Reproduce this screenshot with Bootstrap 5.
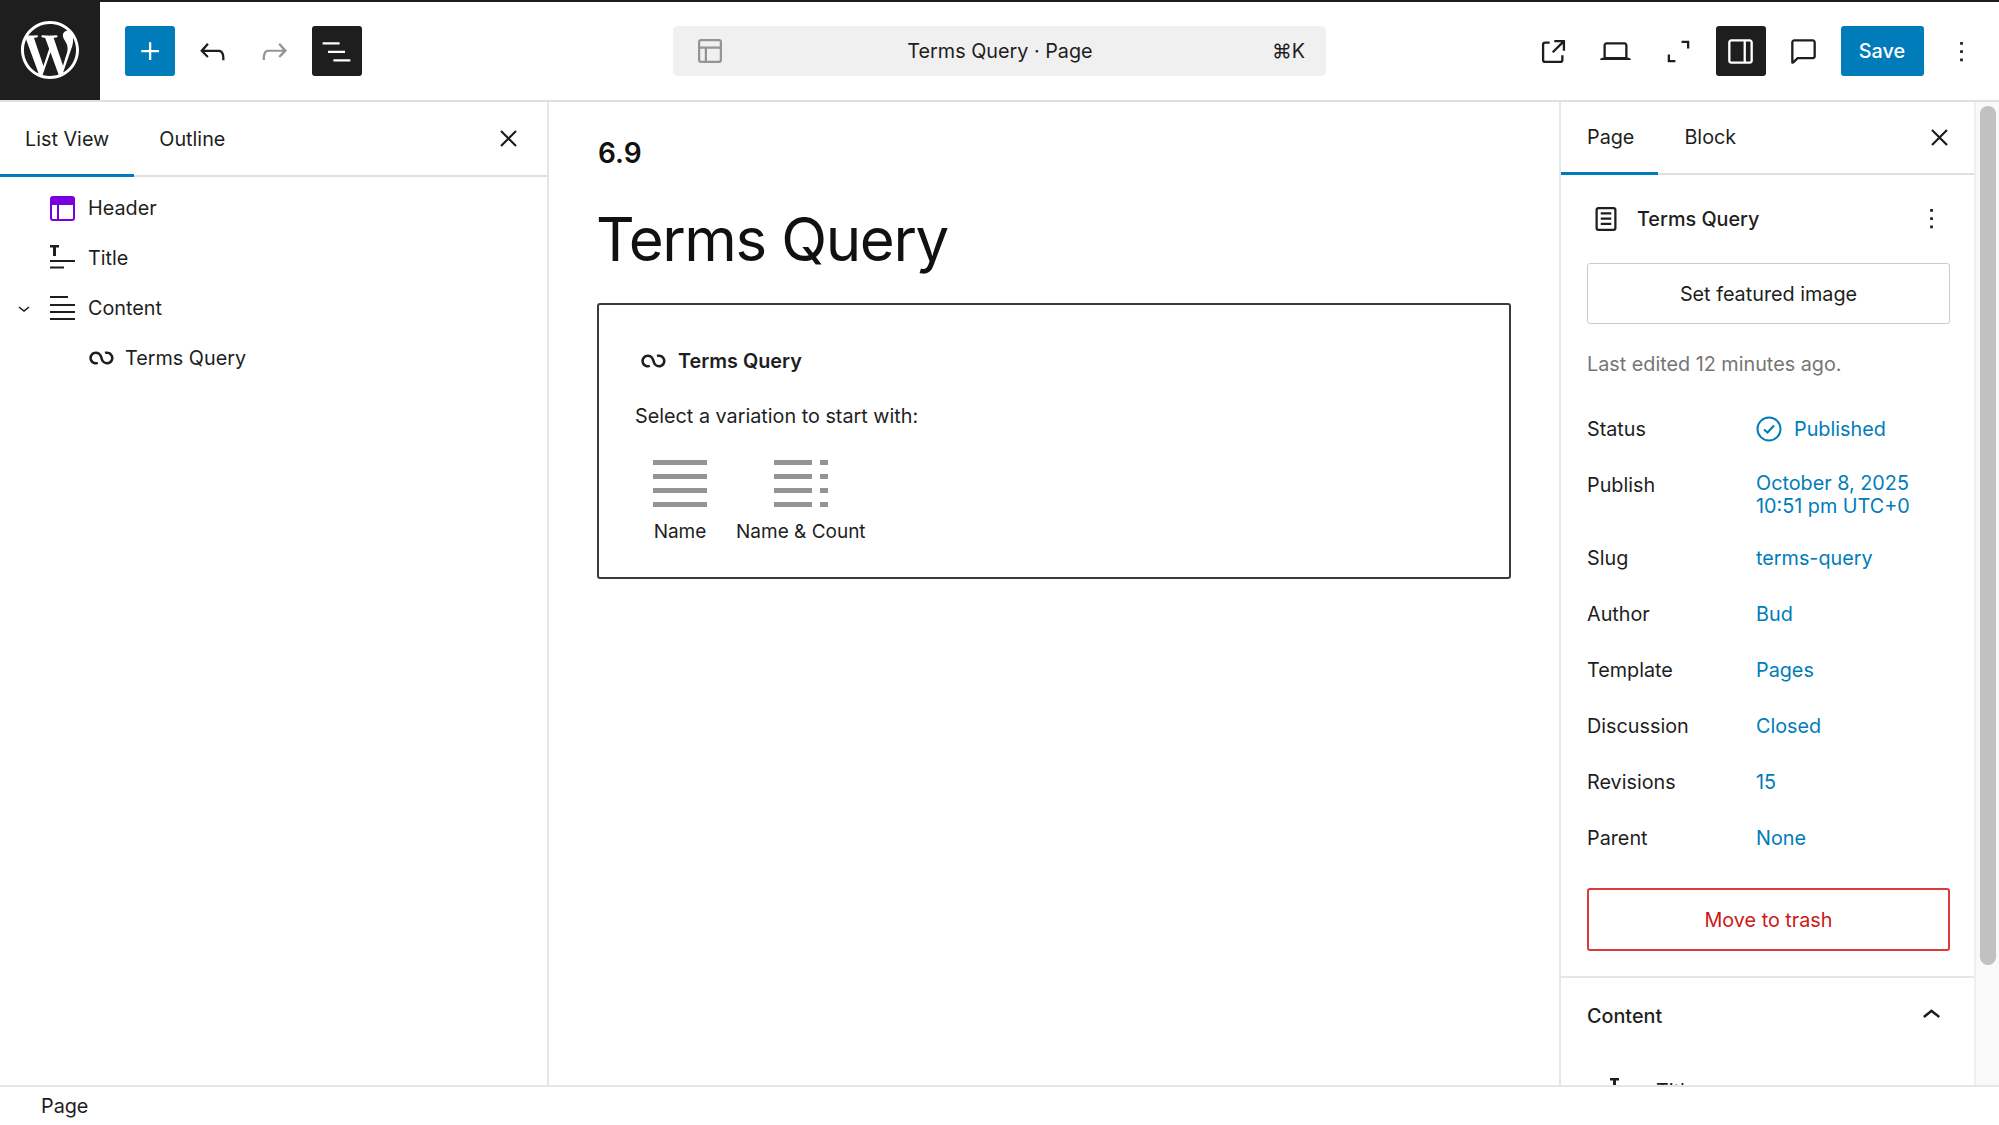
<!DOCTYPE html>
<html lang="en">
<head>
<meta charset="utf-8">
<title>Terms Query</title>
<link href="https://cdn.jsdelivr.net/npm/bootstrap@5.3.0/dist/css/bootstrap.min.css" rel="stylesheet">
<style>
html,body{height:100%;overflow:hidden}
body{font-family:Inter,"Noto Sans",sans-serif;font-size:19.8px;color:#1e1e1e;background:#fff;line-height:24px}
.wp-shell{height:1125px}
.wp-top{height:102px;border-top:2px solid #1e1e1e;border-bottom:2px solid #e0e0e0;flex:none}
.wp-logo{width:100px;height:100px;margin-top:-2px;background:#1e1e1e;flex:none}
.wp-logo svg{width:58px;height:58px;fill:#fff}
.wp-lead{width:673px;flex:none}
.wp-trail{flex:1 1 0;min-width:0;gap:12.5px;padding-right:13px}
.wp-leadbtns{gap:12.2px;margin-left:25px}
.wp-ic{width:33px;height:33px;fill:currentColor;flex:none;display:block}
.wp-ic-l{width:37px;height:37px}
.wp-xmark{width:25px;height:25px;fill:none;stroke:currentColor;stroke-width:2.200;display:block}
.wp-tb{width:50px;height:50px;padding:0;border:0;border-radius:3px;background:transparent;color:#1e1e1e;display:flex;align-items:center;justify-content:center;flex:none}
.wp-tb.is-blue{background:#007cba;color:#fff}
.wp-tb.is-dark{background:#1e1e1e;color:#fff}
.wp-tb.is-off{color:#949494}
.wp-cmd{width:653px;height:50px;background:#f0f0f0;border-radius:5px;padding:0 21px 0 19px;flex:none;position:relative}
.wp-cmd .wp-ic{color:#949494;width:36px;height:36px}
.wp-save{width:83px;height:50px;border-radius:3px;background:#007cba;color:#fff;font-size:19.8px;font-weight:500;display:flex;align-items:center;justify-content:center;border:0;padding:0;flex:none}
.wp-main{height:983px;min-height:0;overflow:hidden}
.wp-left{width:549px;border-right:2px solid #e6e6e6;flex:none}
.wp-tabs{height:75px;border-bottom:2px solid #e0e0e0;flex:none;position:relative}
.wp-tab{height:75px;padding:0 25px;display:flex;align-items:center;color:#1e1e1e;margin-bottom:-2px;border-bottom:3px solid transparent;padding-top:1px}
.wp-tab.is-on{border-bottom-color:#007cba}
.wp-close{margin:11px 14px 0 0}
.wp-tree{padding-top:6px}
.wp-node{height:50px;display:flex;align-items:center;position:relative}
.wp-node .wp-ic{margin-right:9px}
.wp-node-1{padding-left:46px}
.wp-node-2{padding-left:85px}
.wp-node-2 .wp-ic{width:37px;height:37px;margin-right:5px;margin-left:-2px}
.wp-caret{width:24px;height:24px;position:absolute;left:12px;top:13px;fill:#1e1e1e}
.wp-canvas{flex:1 1 0;min-width:0;padding:0 48px;border-right:2px solid #e6e6e6}
.wp-ver{font-size:28px;line-height:36px;font-weight:600;margin-top:33px;color:#111;padding-left:1px}
.wp-h1{font-size:60px;line-height:72px;font-weight:400;margin:32px 0 0 -1px;letter-spacing:-1.400px;color:#111}
.wp-ph{height:276px;border:2px solid #3a3a3a;border-radius:3px;margin-top:28px;padding:0 0 0 36px}
.wp-ph-head{height:28px;margin-top:42px;font-weight:600}
.wp-ph-head .wp-ic{width:37px;height:37px;margin-right:6px}
.wp-ph-txt{margin-top:29px;line-height:24px}
.wp-vars{margin-top:32px;margin-left:18px;gap:29px}
.wp-var{display:flex;flex-direction:column;align-items:center;font-size:19px}
.wp-var svg{width:54px;height:48px;fill:#949494;display:block;margin-bottom:12px}
.wp-right{width:415px;flex:none;overflow:hidden;border-right:2px solid #eee}
.wp-right .wp-tab{padding:0 24px 0 26px;height:73px}
.wp-right .wp-tabs{height:73px}
.wp-right .wp-close{margin:10px 10px 0 0}
.wp-panel{padding:0 25px 0 26px;border-bottom:2px solid #e6e6e6;flex:none}
.wp-pagehead{height:87px;margin-bottom:1px;position:relative;font-weight:500}
.wp-pagehead .wp-doc{width:36px;height:36px;margin:0 14px 0 0;position:relative;left:1px}
.wp-pagehead .wp-more{margin-right:1px}
.wp-btnline{height:61px;width:363px;border:1px solid #ccc;border-radius:3px;background:#fff;color:#1e1e1e;display:flex;align-items:center;justify-content:center;font-size:19.8px;font-weight:400;padding:0}
.wp-edited{margin-top:28px;color:#757575;line-height:24px}
.wp-rows{margin-top:25px}
.wp-row{display:flex;height:56px;line-height:56px}
.wp-row.is-tall{height:73px}
.wp-lab{width:169px;flex:none}
.wp-val{color:#007cba;display:flex;align-items:center}
.wp-row.is-tall .wp-val{line-height:23px;padding-top:15px;align-items:flex-start}
.wp-val svg{width:26px;height:26px;margin-right:12px;fill:none;stroke:#007cba;stroke-width:2}
.wp-trash{height:63px;width:363px;border:2px solid #d93a3a;border-radius:3px;background:#fff;color:#cc1818;display:flex;align-items:center;justify-content:center;font-size:19.8px;font-weight:400;padding:0;margin-top:22px;margin-bottom:25px}
.wp-cont-head{height:75px;padding:0 25px 0 26px;font-weight:500;position:relative;flex:none}
.wp-cont-head .wp-ic{margin-right:-1px}
.wp-cut{padding-left:45px;height:40px;margin-top:22px;position:relative;flex:none}
.wp-cut .wp-ic{margin-right:17px}
.wp-cut span{display:block;margin-top:4px}
.wp-scroll{width:23px;background:#f9f9f9;flex:none;padding:4px 3px 0 4px}
.wp-thumb{height:859px;background:#c1c1c1;border-radius:8px}
.wp-foot{height:40px;border-top:2px solid #e6e6e6;padding-left:41px;flex:none;background:#fff}
</style>
</head>
<body>
<div class="wp-shell d-flex flex-column">

<header class="wp-top d-flex align-items-center">
  <div class="wp-lead d-flex align-items-center">
    <div class="wp-logo d-flex align-items-center justify-content-center">
      <svg viewBox="0 0 24 24"><path d="M21.469 6.825c.84 1.537 1.318 3.3 1.318 5.175 0 3.979-2.156 7.456-5.363 9.325l3.295-9.527c.615-1.54.82-2.771.82-3.864 0-.405-.026-.78-.07-1.11m-7.981.105c.647-.03 1.232-.105 1.232-.105.582-.075.514-.93-.067-.899 0 0-1.755.135-2.88.135-1.064 0-2.85-.15-2.85-.15-.585-.03-.661.855-.075.885 0 0 .54.061 1.125.09l1.68 4.605-2.37 7.08L5.354 6.9c.649-.03 1.234-.1 1.234-.1.585-.075.516-.93-.065-.896 0 0-1.746.138-2.874.138-.2 0-.438-.008-.69-.015C4.911 3.15 8.235 1.215 12 1.215c2.809 0 5.365 1.072 7.286 2.833-.046-.003-.091-.009-.141-.009-1.06 0-1.812.923-1.812 1.914 0 .89.513 1.643 1.06 2.531.411.72.89 1.643.89 2.977 0 .915-.354 1.994-.821 3.479l-1.075 3.585-3.9-11.61.001.014zM12 22.784c-1.059 0-2.081-.153-3.048-.437l3.237-9.406 3.315 9.087c.024.053.05.101.078.149-1.12.393-2.325.609-3.582.609M1.211 12c0-1.564.336-3.05.935-4.39L7.29 21.709C3.694 19.96 1.212 16.271 1.211 12M12 0C5.385 0 0 5.385 0 12s5.385 12 12 12 12-5.385 12-12S18.615 0 12 0"/></svg>
    </div>
    <div class="wp-leadbtns d-flex align-items-center">
      <button class="wp-tb is-blue"><svg class="wp-ic wp-ic-l" viewBox="0 0 24 24"><path d="M11 12.5V17.5H12.5V12.5H17.5V11H12.5V6H11V11H6V12.5H11Z"/></svg></button>
      <button class="wp-tb"><svg class="wp-ic wp-ic-l" viewBox="0 0 24 24"><path d="M18.3 11.7c-.6-.6-1.4-.9-2.3-.9H6.7l2.9-3.3-1.1-1-4.5 5L8.5 16l1-1-2.7-2.7H16c.5 0 .9.2 1.3.5 1 1 1 3.4 1 4.5v.3h1.5v-.2c0-1.5 0-4.3-1.5-5.7z"/></svg></button>
      <button class="wp-tb is-off"><svg class="wp-ic wp-ic-l" viewBox="0 0 24 24"><path d="M15.6 6.5l-1.1 1 2.9 3.3H8c-.9 0-1.7.3-2.3.9-1.4 1.5-1.4 4.2-1.4 5.6v.2h1.5v-.3c0-1.1 0-3.5 1-4.5.3-.3.7-.5 1.3-.5h9.2L14.5 15l1.1 1.1 4.5-4.6-4.5-5z"/></svg></button>
      <button class="wp-tb is-dark"><svg class="wp-ic wp-ic-l" viewBox="0 0 24 24"><path d="M3 6h11v1.5H3V6zm3.5 5.5h11V13h-11v-1.5zM21 17H10v1.5h11V17z"/></svg></button>
    </div>
  </div>
  <div class="wp-cmd d-flex align-items-center justify-content-between">
    <svg class="wp-ic" viewBox="0 0 24 24"><path d="M18 5.5H6a.5.5 0 00-.5.5v3h13V6a.5.5 0 00-.5-.5zm.5 5H10v8h8a.5.5 0 00.5-.5v-7.5zm-10 0h-3V18a.5.5 0 00.5.5h2.5v-8zM6 4h12a2 2 0 012 2v12a2 2 0 01-2 2H6a2 2 0 01-2-2V6a2 2 0 012-2z"/></svg>
    <span>Terms Query · Page</span>
    <span>⌘K</span>
  </div>
  <div class="wp-trail d-flex align-items-center justify-content-end">
    <button class="wp-tb"><svg class="wp-ic wp-ic-l" viewBox="0 0 24 24"><path d="M19.5 4.5h-7V6h4.44l-5.97 5.97 1.06 1.06L18 7.06v4.44h1.5v-7Zm-13 1a2 2 0 0 0-2 2v10a2 2 0 0 0 2 2h10a2 2 0 0 0 2-2v-3H17v3a.5.5 0 0 1-.5.5h-10a.5.5 0 0 1-.5-.5v-10a.5.5 0 0 1 .5-.5h3V5.5h-3Z"/></svg></button>
    <button class="wp-tb"><svg class="wp-ic wp-ic-l" viewBox="0 0 24 24"><path d="M20.5 16h-.7V8c0-1.1-.9-2-2-2H6.2c-1.1 0-2 .9-2 2v8h-.7c-.8 0-1.5.7-1.5 1.5h20c0-.8-.7-1.5-1.5-1.5zM5.7 8c0-.3.2-.5.5-.5h11.6c.3 0 .5.2.5.5v7.6H5.7V8z"/></svg></button>
    <button class="wp-tb"><svg class="wp-ic wp-ic-l" viewBox="0 0 24 24"><path d="M14 5h5v5h-1.5V6.5H14V5ZM5 14h1.5v3.5H10V19H5v-5Z"/></svg></button>
    <button class="wp-tb is-dark"><svg class="wp-ic wp-ic-l" viewBox="0 0 24 24"><path d="M18 4H6c-1.1 0-2 .9-2 2v12c0 1.1.9 2 2 2h12c1.1 0 2-.9 2-2V6c0-1.1-.9-2-2-2zM5.500 18V6c0-.3.2-.5.5-.5h8v13H6c-.3 0-.5-.2-.5-.5zm13 0c0 .3-.2.5-.5.5h-2.500v-13H18c.3 0 .5.2.5.5v12z"/></svg></button>
    <button class="wp-tb"><svg class="wp-ic wp-ic-l" viewBox="0 0 24 24"><path d="M18 4H6c-1.1 0-2 .9-2 2v12.9c0 .6.5 1.1 1.1 1.1.3 0 .5-.1.8-.3L8.5 17H18c1.1 0 2-.9 2-2V6c0-1.1-.9-2-2-2zm.5 11c0 .3-.2.5-.5.5H7.900l-2.400 2.400V6c0-.3.2-.5.5-.5h12c.3 0 .5.2.5.5v9z"/></svg></button>
    <button class="wp-save">Save</button>
    <button class="wp-tb"><svg class="wp-ic" viewBox="0 0 24 24"><path d="M13 19h-2v-2h2v2zm0-6h-2v-2h2v2zm0-6h-2V5h2v2z"/></svg></button>
  </div>
</header>

<div class="wp-main d-flex">
  <aside class="wp-left d-flex flex-column">
    <div class="wp-tabs d-flex align-items-start justify-content-between">
      <div class="d-flex">
        <div class="wp-tab is-on">List View</div>
        <div class="wp-tab">Outline</div>
      </div>
      <button class="wp-tb wp-close"><svg class="wp-xmark" viewBox="0 0 25 25"><path d="M5 5l15 15M20 5L5 20"/></svg></button>
    </div>
    <div class="wp-tree">
      <div class="wp-node wp-node-1">
        <svg class="wp-ic" viewBox="0 0 33 33"><path fill="#7a00df" d="M7 4h19a3 3 0 0 1 3 3v19a3 3 0 0 1-3 3H7a3 3 0 0 1-3-3V7a3 3 0 0 1 3-3Zm-1 9v13a1 1 0 0 0 1 1h4V13H6Zm7 0v14h13a1 1 0 0 0 1-1V13H13Z"/></svg>
        <span>Header</span>
      </div>
      <div class="wp-node wp-node-1">
        <svg class="wp-ic" viewBox="0 0 33 33"><path d="M4 3h9v2.500H10v8.500H7V5.500H4zM4 18h25v2H4zM4 24.500h14v2H4z" fill="#1e1e1e"/></svg>
        <span>Title</span>
      </div>
      <div class="wp-node wp-node-1">
        <svg class="wp-caret" viewBox="0 0 24 24"><path d="M17.500 11.600L12 16l-5.500-4.400.9-1.200L12 14l4.500-3.600 1 1.200z"/></svg>
        <svg class="wp-ic" viewBox="0 0 33 33"><path d="M4 4h18v2H4zM4 12h25v2H4zM4 19h25v2H4zM4 26h25v2H4z" fill="#1e1e1e"/></svg>
        <span>Content</span>
      </div>
      <div class="wp-node wp-node-2">
        <svg class="wp-ic" viewBox="0 0 24 24"><path d="M18.1823 11.6392C18.1823 13.0804 17.0139 14.2487 15.5727 14.2487C14.3579 14.2487 13.335 13.4179 13.0453 12.2922L13.0377 12.2625L13.0278 12.2335L12.3985 10.377L12.3942 10.3785C11.8571 8.64997 10.246 7.39405 8.33961 7.39405C5.99509 7.39405 4.09448 9.29465 4.09448 11.6392C4.09448 13.9837 5.99509 15.8843 8.33961 15.8843C8.88499 15.8843 9.40822 15.781 9.88943 15.5923L9.29212 14.0697C8.99812 14.185 8.67729 14.2487 8.33961 14.2487C6.89838 14.2487 5.73003 13.0804 5.73003 11.6392C5.73003 10.1979 6.89838 9.02959 8.33961 9.02959C9.55444 9.02959 10.5773 9.86046 10.867 10.9862L10.8772 11.0259L10.8913 11.0645L11.4978 12.8451L11.5178 12.8384C12.0504 14.5944 13.6824 15.8843 15.5727 15.8843C17.9173 15.8843 19.8179 13.9837 19.8179 11.6392C19.8179 9.29465 17.9173 7.39404 15.5727 7.39404C15.0273 7.39404 14.5041 7.49731 14.0229 7.68606L14.6202 9.20866C14.9142 9.09334 15.235 9.02959 15.5727 9.02959C17.0139 9.02959 18.1823 10.1979 18.1823 11.6392Z"/></svg>
        <span>Terms Query</span>
      </div>
    </div>
  </aside>

  <main class="wp-canvas">
    <div class="wp-ver">6.9</div>
    <h1 class="wp-h1">Terms Query</h1>
    <div class="wp-ph">
      <div class="wp-ph-head d-flex align-items-center">
        <svg class="wp-ic" viewBox="0 0 24 24"><path d="M18.1823 11.6392C18.1823 13.0804 17.0139 14.2487 15.5727 14.2487C14.3579 14.2487 13.335 13.4179 13.0453 12.2922L13.0377 12.2625L13.0278 12.2335L12.3985 10.377L12.3942 10.3785C11.8571 8.64997 10.246 7.39405 8.33961 7.39405C5.99509 7.39405 4.09448 9.29465 4.09448 11.6392C4.09448 13.9837 5.99509 15.8843 8.33961 15.8843C8.88499 15.8843 9.40822 15.781 9.88943 15.5923L9.29212 14.0697C8.99812 14.185 8.67729 14.2487 8.33961 14.2487C6.89838 14.2487 5.73003 13.0804 5.73003 11.6392C5.73003 10.1979 6.89838 9.02959 8.33961 9.02959C9.55444 9.02959 10.5773 9.86046 10.867 10.9862L10.8772 11.0259L10.8913 11.0645L11.4978 12.8451L11.5178 12.8384C12.0504 14.5944 13.6824 15.8843 15.5727 15.8843C17.9173 15.8843 19.8179 13.9837 19.8179 11.6392C19.8179 9.29465 17.9173 7.39404 15.5727 7.39404C15.0273 7.39404 14.5041 7.49731 14.0229 7.68606L14.6202 9.20866C14.9142 9.09334 15.235 9.02959 15.5727 9.02959C17.0139 9.02959 18.1823 10.1979 18.1823 11.6392Z"/></svg>
        <span>Terms Query</span>
      </div>
      <div class="wp-ph-txt">Select a variation to start with:</div>
      <div class="wp-vars d-flex">
        <div class="wp-var">
          <svg viewBox="0 0 54 48"><path d="M0 0h54v5H0zM0 14h54v5H0zM0 28h54v5H0zM0 42h54v5H0z"/></svg>
          <span>Name</span>
        </div>
        <div class="wp-var">
          <svg viewBox="0 0 54 48"><path d="M0 0h38v5H0zM46 0h8v5h-8zM0 14h38v5H0zM46 14h8v5h-8zM0 28h38v5H0zM46 28h8v5h-8zM0 42h38v5H0zM46 42h8v5h-8z"/></svg>
          <span>Name &amp; Count</span>
        </div>
      </div>
    </div>
  </main>

  <aside class="wp-right d-flex flex-column">
    <div class="wp-tabs d-flex align-items-start justify-content-between">
      <div class="d-flex">
        <div class="wp-tab is-on">Page</div>
        <div class="wp-tab">Block</div>
      </div>
      <button class="wp-tb wp-close"><svg class="wp-xmark" viewBox="0 0 25 25"><path d="M5 5l15 15M20 5L5 20"/></svg></button>
    </div>
    <div class="wp-panel">
      <div class="wp-pagehead d-flex align-items-center">
        <svg class="wp-ic wp-doc" viewBox="0 0 24 24"><path d="M15.500 7.500h-7V9h7V7.500Zm-7 3.500h7v1.500h-7V11Zm7 3.500h-7V16h7v-1.500Z"/><path fill-rule="evenodd" d="M17 4H7a2 2 0 0 0-2 2v12a2 2 0 0 0 2 2h10a2 2 0 0 0 2-2V6a2 2 0 0 0-2-2Zm0 1.500H7a.5.5 0 0 0-.5.5v12a.5.5 0 0 0 .5.5h10a.5.5 0 0 0 .5-.5V6a.5.5 0 0 0-.5-.5Z"/></svg>
        <span class="flex-grow-1">Terms Query</span>
        <svg class="wp-ic wp-more" viewBox="0 0 24 24"><path d="M13 19h-2v-2h2v2zm0-6h-2v-2h2v2zm0-6h-2V5h2v2z"/></svg>
      </div>
      <button class="wp-btnline">Set featured image</button>
      <div class="wp-edited">Last edited 12 minutes ago.</div>
      <div class="wp-rows">
        <div class="wp-row"><div class="wp-lab">Status</div><div class="wp-val"><svg viewBox="0 0 26 26"><circle cx="13" cy="13" r="11.500"/><path d="M8 13.500l3.500 3L18 9.500"/></svg>Published</div></div>
        <div class="wp-row is-tall"><div class="wp-lab">Publish</div><div class="wp-val">October 8, 2025<br>10:51 pm UTC+0</div></div>
        <div class="wp-row"><div class="wp-lab">Slug</div><div class="wp-val">terms-query</div></div>
        <div class="wp-row"><div class="wp-lab">Author</div><div class="wp-val">Bud</div></div>
        <div class="wp-row"><div class="wp-lab">Template</div><div class="wp-val">Pages</div></div>
        <div class="wp-row"><div class="wp-lab">Discussion</div><div class="wp-val">Closed</div></div>
        <div class="wp-row"><div class="wp-lab">Revisions</div><div class="wp-val">15</div></div>
        <div class="wp-row"><div class="wp-lab">Parent</div><div class="wp-val">None</div></div>
      </div>
      <button class="wp-trash">Move to trash</button>
    </div>
    <div class="wp-cont-head d-flex align-items-center justify-content-between">
      <span>Content</span>
      <svg class="wp-ic wp-ic-l" viewBox="0 0 24 24"><path d="M6.500 12.400L12 8l5.500 4.400-.9 1.200L12 10l-4.500 3.600-1-1.200z"/></svg>
    </div>
    <div class="wp-cut d-flex align-items-start">
      <svg class="wp-ic" viewBox="0 0 33 33"><path d="M4 3h9v2.500H10v8.500H7V5.500H4zM4 18h25v2H4zM4 24.500h14v2H4z" fill="#1e1e1e"/></svg>
      <span>Title</span>
    </div>
  </aside>
  <div class="wp-scroll"><div class="wp-thumb"></div></div>
</div>

<footer class="wp-foot d-flex align-items-center">Page</footer>
</div>
<script src="https://cdn.jsdelivr.net/npm/bootstrap@5.3.0/dist/js/bootstrap.bundle.min.js"></script>
</body>
</html>
